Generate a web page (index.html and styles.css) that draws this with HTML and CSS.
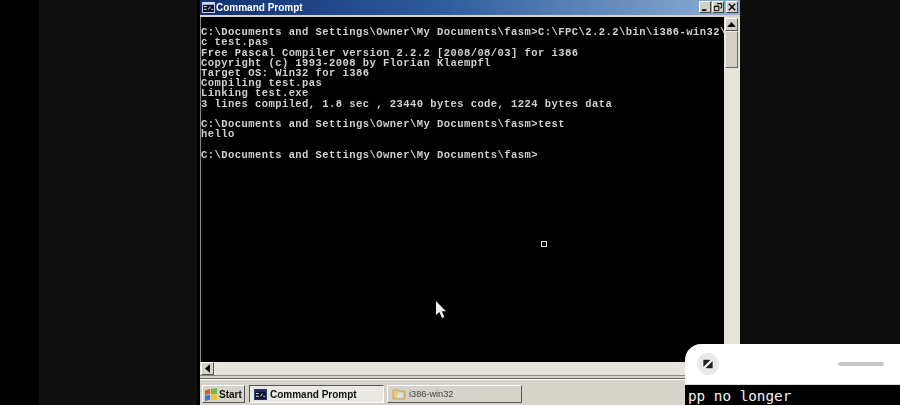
FILE: index.html
```html
<!DOCTYPE html>
<html lang="en">
<head>
<meta charset="utf-8">
<title>Command Prompt</title>
<link rel="stylesheet" href="styles.css">
</head>
<body>
<div class="stage">
  <div class="band-black"></div>
  <div class="band-dark"></div>
  <div class="band-gap"></div>
  <div class="desktop">
    <div class="titlebar">
      <svg class="cmd-icon" viewBox="0 0 14 12"><rect width="14" height="12" fill="#d8d8e8"/><rect x="1" y="3" width="12" height="8" fill="#101030"/><path d="M2 5h3M2 8h3M7 8l2-3M10 8h2" stroke="#fff" stroke-width="1"/></svg>
      <span class="title">Command Prompt</span>
      <div class="win-btns">
        <div class="win-btn"><svg viewBox="0 0 11 11"><rect x="2" y="8" width="5" height="2" fill="#000"/></svg></div>
        <div class="win-btn"><svg viewBox="0 0 11 11"><path d="M4.500 1.500h5v5h-2M1.500 4.500h5v5h-5z M4.500 2h5M1.500 5h5" fill="none" stroke="#000"/></svg></div>
        <div class="win-btn btn-close"><svg viewBox="0 0 11 11"><path d="M2 2l7 7M9 2l-7 7" stroke="#000" stroke-width="1.600"/></svg></div>
      </div>
    </div>
    <div class="console-row">
      <div class="console-col">
        <pre class="console">

C:\Documents and Settings\Owner\My Documents\fasm&gt;C:\FPC\2.2.2\bin\i386-win32\
c test.pas
Free Pascal Compiler version 2.2.2 [2008/08/03] for i386
Copyright (c) 1993-2008 by Florian Klaempfl
Target OS: Win32 for i386
Compiling test.pas
Linking test.exe
3 lines compiled, 1.8 sec , 23440 bytes code, 1224 bytes data

C:\Documents and Settings\Owner\My Documents\fasm&gt;test
hello

C:\Documents and Settings\Owner\My Documents\fasm&gt;</pre>
        <div class="caret-box"></div>
        <svg class="pointer" viewBox="0 0 12 20"><path d="M1 1v14l3.400-3 2.600 6 2.400-1-2.600-5.800H11z" fill="#eee"/></svg>
      </div>
      <div class="vscroll">
        <div class="arrow-btn"><svg viewBox="0 0 9 9"><path d="M4.500 2.500L8 6.500H1z" fill="#000"/></svg></div>
        <div class="vthumb"></div>
      </div>
    </div>
    <div class="hscroll">
      <div class="arrow-btn arrow-left"><svg viewBox="0 0 9 9"><path d="M2.500 4.500L6.500 1v7z" fill="#000"/></svg></div>
    </div>
    <div class="frame-line"></div>
    <div class="taskbar">
      <div class="start">
        <svg class="flag" viewBox="0 0 14 13"><path d="M1 2.500l5-1.500v5l-5 1z" fill="#e2562a"/><path d="M7 1l6-1v6l-6 .5z" fill="#7db83a"/><path d="M1 7.500l5-.8v5L1 13z" fill="#3a76d8"/><path d="M7 6.500l6-.5v6l-6 .5z" fill="#f2c22e"/></svg>
        <span>Start</span>
      </div>
      <div class="task active">
        <svg class="cmd-icon" viewBox="0 0 14 12"><rect width="14" height="12" fill="#203060"/><rect x="1" y="3" width="12" height="8" fill="#101030"/><path d="M2 5h3M2 8h3M7 8l2-3M10 8h2" stroke="#fff" stroke-width="1"/></svg>
        <span>Command Prompt</span>
      </div>
      <div class="task folder">
        <svg class="folder-icon" viewBox="0 0 14 12"><path d="M1 2h5l1 1h6v8H1z" fill="#eccb72" stroke="#a88a3c" stroke-width=".6"/><circle cx="8" cy="7" r="3" fill="#cfe2f2"/></svg>
        <span>i386-win32</span>
      </div>
    </div>
  </div>
  <div class="band-right"></div>
  <div class="sheet">
    <div class="sheet-head">
      <div class="sheet-badge"><svg viewBox="0 0 18 18"><circle cx="9" cy="9" r="7.500" fill="#f4f4f4"/><path d="M3 3.500h9.500L3 13z" fill="#222"/><path d="M15 14.500H5.500L15 5z" fill="#222"/></svg></div>
      <div class="sheet-handle"></div>
    </div>
    <div class="sheet-text">pp no longer</div>
  </div>
</div>
</body>
</html>
```
FILE: styles.css
```css
* { box-sizing: border-box; }
html, body { margin: 0; padding: 0; background: #000; }
.stage { position: relative; display: flex; width: 900px; height: 405px; overflow: hidden; background: #000; }
.band-black { width: 39px; background: #000; }
.band-dark { width: 158px; background: #101010; }
.band-gap { width: 3px; background: #000; }
.desktop { width: 540px; height: 405px; display: flex; flex-direction: column; background: #d6d3cb; filter: blur(.35px); }
.band-right { flex: 1; background: #0d0d0d; }
.titlebar { height: 15px; flex: none; display: flex; align-items: center; padding: 0 0 1px 2px; background: linear-gradient(90deg, #103070 0%, #2f5c9e 45%, #8fb0d4 100%); }
.cmd-icon { width: 13px; height: 11px; flex: none; }
.title { margin-left: 1px; font: bold 10px "Liberation Sans", sans-serif; color: #fff; }
.win-btns { margin-left: auto; display: flex; padding-right: 2px; }
.win-btn { width: 12px; height: 12px; margin-left: 1px; background: #d4d0c8; border: 1px solid; border-color: #fff #444 #444 #fff; }
.win-btn svg { display: block; width: 10px; height: 10px; }
.btn-close { margin-left: 2px; }
.console-row { height: 347px; flex: none; display: flex; padding-top: 2px; }
.console-col { position: relative; width: 524px; height: 345px; background: #000; overflow: hidden; border-left: 1px solid #888; }
.console { margin: 0; padding: 0; font: bold 10.5px/10.2px "Liberation Mono", monospace; letter-spacing: .44px; color: #cfcfcf; white-space: pre; }
.caret-box { position: absolute; left: 340px; top: 224px; width: 6px; height: 6px; border: 1.500px solid #ddd; background: #111; }
.pointer { position: absolute; left: 234px; top: 283px; width: 12px; height: 20px; }
.vscroll { flex: 1; display: flex; flex-direction: column; background: #e6e3dc; }
.arrow-btn { width: 13px; height: 13px; margin: 1px 0 0 1px; flex: none; background: #d4d0c8; border: 1px solid; border-color: #fff #555 #555 #fff; }
.arrow-btn svg { display: block; width: 11px; height: 11px; }
.vthumb { width: 13px; height: 37px; margin-left: 1px; background: #d4d0c8; border: 1px solid; border-color: #eee #666 #666 #eee; }
.hscroll { height: 13px; flex: none; display: flex; background: #e6e3dc; padding-left: 1px; }
.arrow-left { margin: 0; }
.frame-line { height: 4px; flex: none; background: #d6d3cb; border-bottom: 1px solid #666; border-top: 1px solid #888; }
.taskbar { flex: 1; display: flex; align-items: flex-start; gap: 3px; padding: 5px 0 0 2px; background: #d6d3cb; border-top: 1px solid #fff; }
.start { width: 43px; height: 18px; margin-right: 1px; display: flex; align-items: center; gap: 1px; padding-left: 1px; border: 1px solid; border-color: #fff #555 #555 #fff; font: bold 10px "Liberation Sans", sans-serif; color: #111; }
.flag { width: 14px; height: 13px; flex: none; }
.task { height: 18px; display: flex; align-items: center; gap: 3px; padding-left: 4px; border: 1px solid; }
.task.active { width: 135px; font: bold 10px "Liberation Sans", sans-serif; color: #111; background: #ebe9e3; border-color: #555 #fff #fff #555; }
.task.folder { width: 135px; font: 9.2px "Liberation Sans", sans-serif; border-color: #fff #555 #555 #fff; color: #444; }
.folder-icon { width: 14px; height: 12px; flex: none; }
.sheet { position: absolute; left: 685px; top: 344px; width: 215px; height: 61px; display: flex; flex-direction: column; background: #000; }
.sheet-head { height: 41px; flex: none; display: flex; align-items: center; justify-content: space-between; padding: 0 16px 0 12px; background: #fff; border-radius: 16px 0 0 0; border-bottom: 1px solid #ddd; }
.sheet-badge { width: 22px; height: 22px; border-radius: 50%; background: #e9e9e9; display: flex; align-items: center; justify-content: center; }
.sheet-badge svg { width: 14px; height: 14px; }
.sheet-handle { width: 46px; height: 4px; border-radius: 2px; background: #c8c8c8; }
.sheet-text { padding: 3px 0 0 3px; font: 14.3px/17px "DejaVu Sans Mono", monospace; color: #f2f2f2; white-space: nowrap; }
```
